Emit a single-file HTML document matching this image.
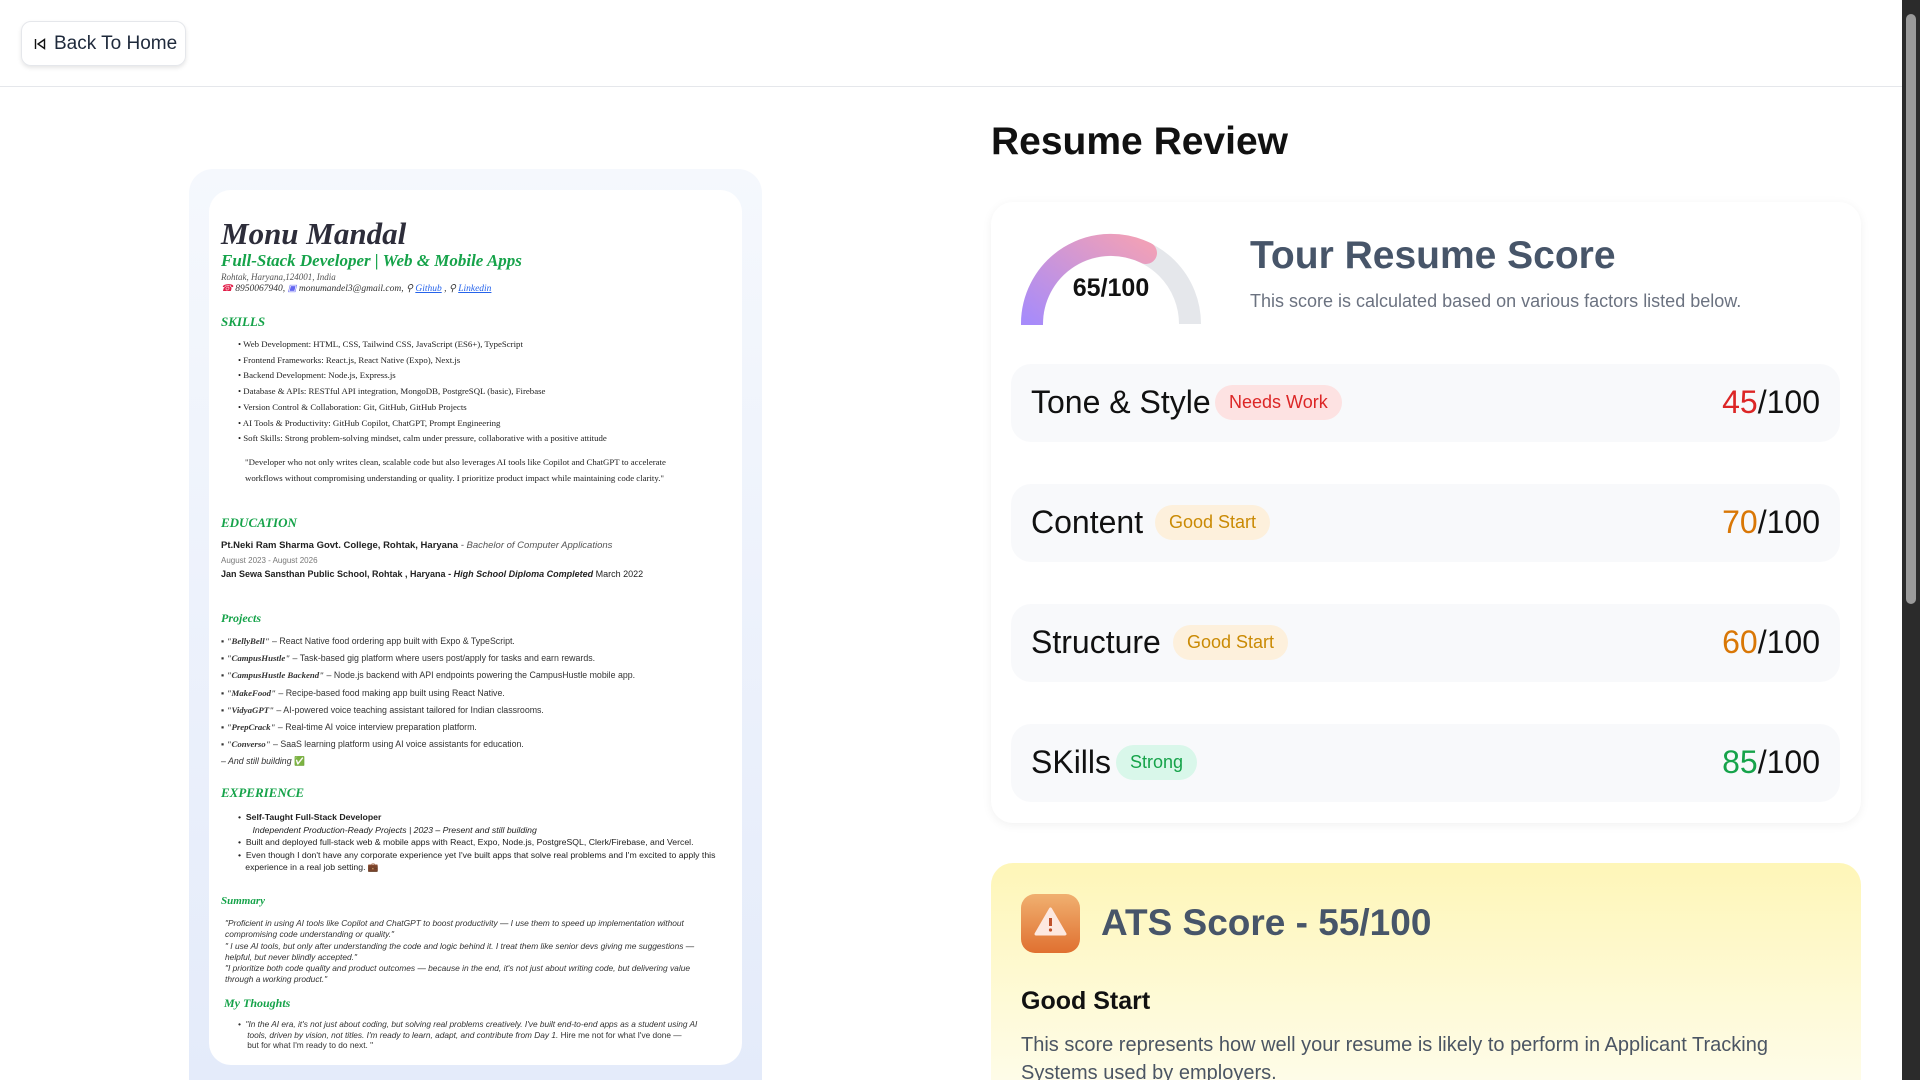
<!DOCTYPE html>
<html><head><meta charset="utf-8"><style>
*{margin:0;padding:0;box-sizing:border-box}
html{width:1920px;height:1080px;overflow:hidden}
body{width:1920px;height:1080px;overflow:hidden;background:#fff;font-family:"Liberation Sans",sans-serif;position:relative;color:#111}
.abs{position:absolute;white-space:nowrap}
.hdr{position:absolute;left:0;top:0;width:1902px;height:87px;border-bottom:1px solid #e5e7eb}
.btn{position:absolute;left:21px;top:21px;width:165px;height:45px;border:1px solid #e5e7eb;border-radius:10px;box-shadow:0 2px 4px rgba(0,0,0,.1);font-size:19px;color:#1e293b;display:flex;align-items:center;padding-left:32px}
.sb{position:absolute;left:1902px;top:0;width:18px;height:1080px;background:#2b2b2b}
.sb .th{position:absolute;left:4px;top:14px;width:10px;height:590px;background:#9a9a9a;border-radius:5px}
.rp{position:absolute;left:189px;top:169px;width:573px;height:911px;background:linear-gradient(#f5f8fd,#e4ebfa);border-radius:24px 24px 0 0}
.rw{position:absolute;left:209px;top:190px;width:533px;height:875px;background:#fff;border-radius:22px}
.r{position:absolute;left:221px;white-space:nowrap;font-family:"Liberation Sans",sans-serif;font-size:9px;color:#222;line-height:12px}
.sf{font-family:"Liberation Serif",serif}
.cur{font-family:"Liberation Serif",serif;font-style:italic;font-weight:bold;color:#16a34a}
.card{position:absolute;left:991px;top:202px;width:870px;height:621px;background:#fff;border-radius:22px;box-shadow:0 2px 10px rgba(0,0,0,.06)}
.row{position:absolute;left:1011px;width:829px;height:78px;background:#f8f9fb;border-radius:20px}
.row .l{position:absolute;left:20px;top:20px;font-size:32px;color:#111}
.row .b{position:absolute;top:21px;height:35px;border-radius:18px;font-size:18px;line-height:35px;padding:0 14px}
.row .s{position:absolute;right:20px;top:20px;font-size:32px;color:#111}
.ats{position:absolute;left:991px;top:863px;width:870px;height:217px;background:linear-gradient(#fef6b8,#fefce8);border-radius:22px 22px 0 0}
</style></head><body>
<div class="hdr"></div>
<div class="btn"><svg class="abs" style="left:12px;top:16px" width="12" height="12" viewBox="0 0 12 12"><path d="M1.5 1v10M10.5 1.5L4 6l6.5 4.5z" fill="none" stroke="#111" stroke-width="1.4"/></svg>Back To Home</div>
<div class="sb"><div class="th"></div></div>

<div class="abs" style="left:991px;top:120px;font-size:39px;font-weight:bold;color:#111">Resume Review</div>

<div class="rp"></div><div class="rw"></div>
<div class="r cur" style="top:216px;font-size:31px;line-height:36px;color:#2d2d3a">Monu Mandal</div>
<div class="r cur" style="top:250px;font-size:17px;line-height:22px">Full-Stack Developer | Web &amp; Mobile Apps</div>
<div class="r sf" style="top:271px;font-style:italic;color:#555">Rohtak, Haryana,124001, India</div>
<div class="r sf" style="top:283px;font-style:italic;color:#333;font-size:9.5px"><span style="color:#e11d48">☎</span> 8950067940, <span style="color:#6366f1">▣</span> monumandel3@gmail.com, ⚲ <u style="color:#2563eb">Github</u> , ⚲ <u style="color:#2563eb">Linkedin</u></div>
<div class="r cur" style="top:314px;font-size:13px;line-height:16px">SKILLS</div>
<div class="r sf" style="left:238px;top:337px;font-size:8.8px;line-height:15.7px;white-space:normal;width:500px">
• Web Development: HTML, CSS, Tailwind CSS, JavaScript (ES6+), TypeScript<br>• Frontend Frameworks: React.js, React Native (Expo), Next.js<br>• Backend Development: Node.js, Express.js<br>• Database &amp; APIs: RESTful API integration, MongoDB, PostgreSQL (basic), Firebase<br>• Version Control &amp; Collaboration: Git, GitHub, GitHub Projects<br>• AI Tools &amp; Productivity: GitHub Copilot, ChatGPT, Prompt Engineering<br>• Soft Skills: Strong problem-solving mindset, calm under pressure, collaborative with a positive attitude</div>
<div class="r sf" style="left:245px;top:455px;font-size:8.8px;line-height:15.5px">"Developer who not only writes clean, scalable code but also leverages AI tools like Copilot and ChatGPT to accelerate<br>workflows without compromising understanding or quality. I prioritize product impact while maintaining code clarity."</div>
<div class="r cur" style="top:515px;font-size:13px;line-height:16px">EDUCATION</div>
<div class="r" style="top:540px;font-weight:bold;font-size:9.5px">Pt.Neki Ram Sharma Govt. College, Rohtak, Haryana <span style="font-weight:normal;font-style:italic;color:#555">- Bachelor of Computer Applications</span></div>
<div class="r" style="top:555px;color:#777;font-size:8px">August 2023 - August 2026</div>
<div class="r" style="top:568px;font-weight:bold;font-size:9px">Jan Sewa Sansthan Public School, Rohtak , Haryana - <i>High School Diploma  Completed</i> <span style="font-weight:normal">March 2022</span></div>
<div class="r cur" style="top:611px;font-size:12px;line-height:14px">Projects</div>
<div class="r" style="top:633px;font-size:8.8px;line-height:17.2px;color:#333">
▪ <b class="sf"><i>"BellyBell"</i></b> – React Native food ordering app built with Expo &amp; TypeScript.<br>▪ <b class="sf"><i>"CampusHustle"</i></b> – Task-based gig platform where users post/apply for tasks and earn rewards.<br>▪ <b class="sf"><i>"CampusHustle Backend"</i></b> – Node.js backend with API endpoints powering the CampusHustle mobile app.<br>▪ <b class="sf"><i>"MakeFood"</i></b> – Recipe-based food making app built using React Native.<br>▪ <b class="sf"><i>"VidyaGPT"</i></b> – AI-powered voice teaching assistant tailored for Indian classrooms.<br>▪ <b class="sf"><i>"PrepCrack"</i></b> – Real-time AI voice interview preparation platform.<br>▪ <b class="sf"><i>"Converso"</i></b> – SaaS learning platform using AI voice assistants for education.<br><i>– And still building</i> <span style="color:#22c55e">✅</span></div>
<div class="r cur" style="top:785px;font-size:13px;line-height:16px">EXPERIENCE</div>
<div class="r" style="left:238px;top:811px;font-size:8.7px;line-height:12.5px;color:#222">• &nbsp;<b>Self-Taught Full-Stack Developer</b><br>&nbsp;&nbsp;&nbsp;&nbsp;&nbsp;&nbsp;<i>Independent Production-Ready Projects | 2023 – Present and still building</i><br>• &nbsp;Built and deployed full-stack web &amp; mobile apps with React, Expo, Node.js, PostgreSQL, Clerk/Firebase, and Vercel.<br>• &nbsp;Even though I don't have any corporate experience yet I've built apps that solve real problems and I'm excited to apply this<br>&nbsp;&nbsp;&nbsp;experience in a real job setting. 💼</div>
<div class="r cur" style="top:894px;font-size:11px;line-height:14px">Summary</div>
<div class="r" style="left:225px;top:918px;font-size:8.4px;line-height:11.3px;font-style:italic;color:#333">"Proficient in using AI tools like Copilot and ChatGPT to boost productivity — I use them to speed up implementation without<br>compromising code understanding or quality."<br>" I use AI tools, but only after understanding the code and logic behind it. I treat them like senior devs giving me suggestions —<br>helpful, but never blindly accepted."<br>"I prioritize both code quality and product outcomes — because in the end, it's not just about writing code, but delivering value<br>through a working product."</div>
<div class="r cur" style="left:224px;top:996px;font-size:12px;line-height:15px">My Thoughts</div>
<div class="r" style="left:238px;top:1019px;font-size:8.3px;line-height:10.5px;font-style:italic;color:#333">• &nbsp;"In the AI era, it's not just about coding, but solving real problems creatively. I've built end-to-end apps as a student using AI<br>&nbsp;&nbsp;&nbsp;&nbsp;tools, driven by vision, not titles. I'm ready to learn, adapt, and contribute from Day 1. <span style="font-style:normal">Hire me not for what I've done —</span><br>&nbsp;&nbsp;&nbsp;&nbsp;<span style="font-style:normal">but for what I'm ready to do next. "</span></div>

<div class="card"></div>
<svg class="abs" style="left:1021px;top:233px" width="180" height="92" viewBox="0 0 180 92">
<defs><linearGradient id="g" x1="0" x2="1" y1="1" y2="0"><stop offset="0" stop-color="#a78bfa"/><stop offset="1" stop-color="#f0a0b8"/></linearGradient></defs>
<path d="M11 91A79 79 0 0 1 169 91" fill="none" stroke="#e5e7eb" stroke-width="22"/>
<path d="M11 91A79 79 0 0 1 125 20" fill="none" stroke="url(#g)" stroke-width="22" stroke-linecap="round"/>
</svg>
<div class="abs" style="left:1021px;top:274px;width:180px;text-align:center;font-size:25px;font-weight:bold;color:#111">65/100</div>
<div class="abs" style="left:1250px;top:234px;font-size:39px;font-weight:bold;color:#475569">Tour Resume Score</div>
<div class="abs" style="left:1250px;top:291px;font-size:18px;color:#6b7280">This score is calculated based on various factors listed below.</div>

<div class="row" style="top:364px"><span class="l">Tone &amp; Style</span><span class="b" style="left:204px;background:#fde2e2;color:#dc2626">Needs Work</span><span class="s"><span style="color:#dc2626">45</span>/100</span></div>
<div class="row" style="top:484px"><span class="l">Content</span><span class="b" style="left:144px;background:#fdf0dc;color:#ca8a04">Good Start</span><span class="s"><span style="color:#d97706">70</span>/100</span></div>
<div class="row" style="top:604px"><span class="l">Structure</span><span class="b" style="left:162px;background:#fdf0dc;color:#ca8a04">Good Start</span><span class="s"><span style="color:#d97706">60</span>/100</span></div>
<div class="row" style="top:724px"><span class="l">SKills</span><span class="b" style="left:105px;background:#d9f7ea;color:#16a34a">Strong</span><span class="s"><span style="color:#16a34a">85</span>/100</span></div>

<div class="ats"></div>
<div class="abs" style="left:1021px;top:894px;width:59px;height:59px;border-radius:14px;background:linear-gradient(#f0b070,#e07030)"></div>
<svg class="abs" style="left:1033px;top:905px" width="35" height="34" viewBox="0 0 35 34"><path d="M17.5 4L32 29H3z" fill="#fde8e0" stroke="#fde8e0" stroke-width="3" stroke-linejoin="round"/><path d="M17.5 13v8" stroke="#c0502a" stroke-width="3"/><circle cx="17.5" cy="25" r="1.6" fill="#c0502a"/></svg>
<div class="abs" style="left:1101px;top:902px;font-size:37px;font-weight:bold;color:#475569">ATS Score - 55/100</div>
<div class="abs" style="left:1021px;top:987px;font-size:25px;font-weight:bold;color:#111">Good Start</div>
<div class="abs" style="left:1021px;top:1031px;font-size:20px;line-height:28px;color:#4b5563">This score represents how well your resume is likely to perform in Applicant Tracking<br>Systems used by employers.</div>
</body></html>
